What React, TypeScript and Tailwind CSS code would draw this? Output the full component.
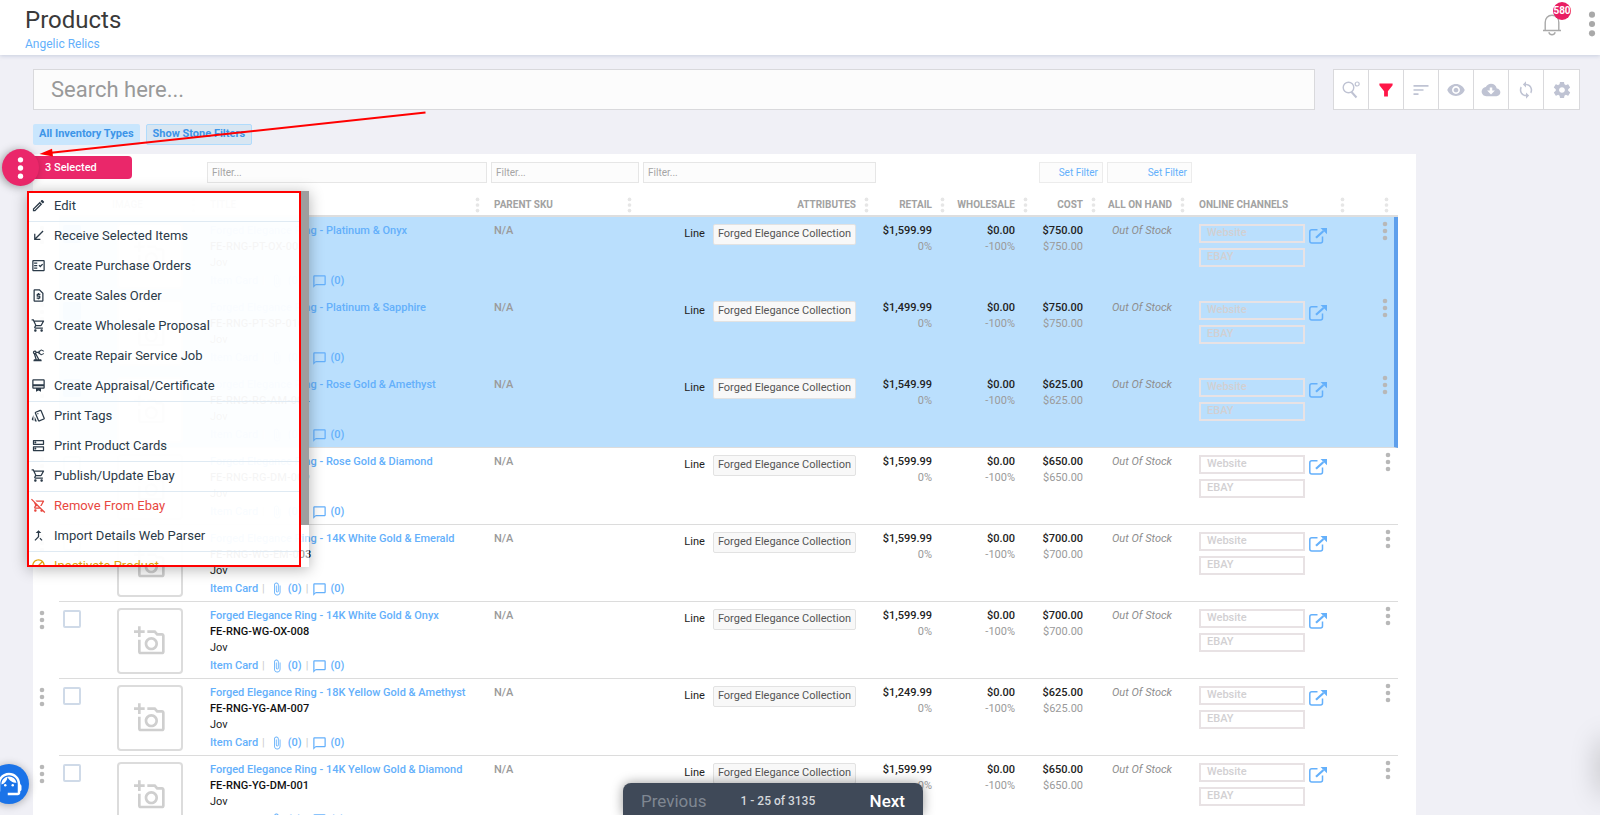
import type { ReactNode } from "react";
import type { IconType } from "react-icons";
import { IoMdEye, IoMdCloudDownload, IoMdSync, IoMdSettings } from "react-icons/io";
import {
  MdAttachFile,
  MdChatBubbleOutline,
  MdOutlineAddAPhoto,
  MdOutlineBlock,
  MdOutlineCallMerge,
  MdOutlineCallReceived,
  MdOutlineCardMembership,
  MdOutlineDns,
  MdOutlineEdit,
  MdOutlineFactCheck,
  MdOutlinePrecisionManufacturing,
  MdOutlineRemoveShoppingCart,
  MdOutlineRequestPage,
  MdOutlineShoppingCart,
  MdOutlineStyle,
  MdOutlineSupportAgent,
  MdSort,
} from "react-icons/md";

type Product = {
  metal: string;
  sku: string;
  retail: string;
  cost: string;
  selected?: boolean;
};

const products: Product[] = [
  { metal: "Platinum & Onyx", sku: "FE-RNG-PT-OX-005", retail: "$1,599.99", cost: "$750.00", selected: true },
  { metal: "Platinum & Sapphire", sku: "FE-RNG-PT-SP-010", retail: "$1,499.99", cost: "$750.00", selected: true },
  { metal: "Rose Gold & Amethyst", sku: "FE-RNG-RG-AM-004", retail: "$1,549.99", cost: "$625.00", selected: true },
  { metal: "Rose Gold & Diamond", sku: "FE-RNG-RG-DM-009", retail: "$1,599.99", cost: "$650.00" },
  { metal: "14K White Gold & Emerald", sku: "FE-RNG-WG-EM-003", retail: "$1,599.99", cost: "$700.00" },
  { metal: "14K White Gold & Onyx", sku: "FE-RNG-WG-OX-008", retail: "$1,599.99", cost: "$700.00" },
  { metal: "18K Yellow Gold & Amethyst", sku: "FE-RNG-YG-AM-007", retail: "$1,249.99", cost: "$625.00" },
  { metal: "14K Yellow Gold & Diamond", sku: "FE-RNG-YG-DM-001", retail: "$1,599.99", cost: "$650.00" },
];

type MenuItem = { label: string; icon: IconType; divider?: boolean; color?: string };

const menuItems: MenuItem[] = [
  { label: "Edit", icon: MdOutlineEdit },
  { label: "Receive Selected Items", icon: MdOutlineCallReceived, divider: true },
  { label: "Create Purchase Orders", icon: MdOutlineFactCheck },
  { label: "Create Sales Order", icon: MdOutlineRequestPage },
  { label: "Create Wholesale Proposal", icon: MdOutlineShoppingCart },
  { label: "Create Repair Service Job", icon: MdOutlinePrecisionManufacturing },
  { label: "Create Appraisal/Certificate", icon: MdOutlineCardMembership },
  { label: "Print Tags", icon: MdOutlineStyle, divider: true },
  { label: "Print Product Cards", icon: MdOutlineDns },
  { label: "Publish/Update Ebay", icon: MdOutlineShoppingCart, divider: true },
  { label: "Remove From Ebay", icon: MdOutlineRemoveShoppingCart, divider: true, color: "text-[#e8483f]" },
  { label: "Import Details Web Parser", icon: MdOutlineCallMerge },
  { label: "Inactivate Product", icon: MdOutlineBlock, divider: true, color: "text-[#e0a30c]" },
];

function Dots({ className }: { className: string }) {
  return (
    <svg viewBox="0 0 6 20" className={className} fill="currentColor" aria-hidden="true">
      <circle cx="3" cy="3" r="2.3" />
      <circle cx="3" cy="10" r="2.3" />
      <circle cx="3" cy="17" r="2.3" />
    </svg>
  );
}

function SearchOptionsIcon() {
  return (
    <svg viewBox="0 0 18 18" className="size-[18px]" fill="none" stroke="currentColor" aria-hidden="true">
      <circle cx="6.5" cy="6.5" r="5.3" strokeWidth="1.4" />
      <path d="M9.5 11 14.5 16.5" strokeWidth="2" />
      <circle cx="15.2" cy="3" r="2" strokeWidth="1.2" />
    </svg>
  );
}

function FunnelIcon() {
  return (
    <svg viewBox="0 0 14 14" className="size-3.5" fill="currentColor" aria-hidden="true">
      <path d="M.4.5h13.2v1.7L8.900 8.200V13.500H5.100V8.200L.4 2.200z" />
    </svg>
  );
}

function BellIcon() {
  return (
    <svg viewBox="0 0 20 22" className="h-[22px] w-5" fill="none" stroke="currentColor" strokeWidth="1.4" aria-hidden="true">
      <path d="M1 16.500h18M3.200 16.300V8.500C3.200 4.200 6 1.300 10 1.300s6.800 2.900 6.800 7.200v7.800" />
      <path d="M6.800 18.300c.5 1.600 1.700 2.400 3.200 2.400s2.700-.8 3.200-2.400" />
    </svg>
  );
}

function OpenIcon() {
  return (
    <svg viewBox="0 0 18 16" className="h-4 w-[18px]" fill="none" stroke="currentColor" aria-hidden="true">
      <path d="M8.500 1.700H2.800c-1.200 0-2 .8-2 2v9.300c0 1.200.8 2 2 2h8.700c1.200 0 2-.8 2-2V8.500" strokeWidth="1.500" />
      <path d="M7 9.800 14.500 3" strokeWidth="2.200" />
      <path d="M11.500 0H18v6.300z" fill="currentColor" stroke="none" />
    </svg>
  );
}

function Header() {
  return (
    <header className="relative z-10 flex h-[55px] shrink-0 justify-between bg-white pl-[25px] pr-1 shadow-[0_1px_4px_rgba(150,165,195,0.45)]">
      <div>
        <h1 className="mt-1 text-2xl leading-8 text-[#3a3a3a]">Products</h1>
        <a href="#" className="block text-xs leading-4 text-[#64b0fb]">Angelic Relics</a>
      </div>
      <div className="flex items-start gap-[26px] pt-3.5">
        <button aria-label="Notifications" className="relative text-[#a9a9a9]">
          <BellIcon />
          <span className="absolute -top-3 left-[11px] flex size-[18px] items-center justify-center rounded-full bg-[#e91e63] text-[10px] font-bold text-white">
            580
          </span>
        </button>
        <button aria-label="More" className="-mt-1 text-[#a9a9a9]">
          <Dots className="h-7 w-2" />
        </button>
      </div>
    </header>
  );
}

function Tool({ label, children }: { label: string; children: ReactNode }) {
  return (
    <button aria-label={label} className="flex w-[35px] items-center justify-center border-r border-[#d9d9dc] last:border-r-0">
      {children}
    </button>
  );
}

function Toolbar() {
  return (
    <div className="flex h-[41px] border border-[#d9d9dc] bg-white text-[#bfc3d3]">
      <Tool label="Search options"><SearchOptionsIcon /></Tool>
      <Tool label="Filter"><span className="text-[#ff1748]"><FunnelIcon /></span></Tool>
      <Tool label="Sort"><MdSort size={20} /></Tool>
      <Tool label="Visibility"><IoMdEye size={20} /></Tool>
      <Tool label="Download"><IoMdCloudDownload size={20} /></Tool>
      <Tool label="Refresh"><IoMdSync size={20} /></Tool>
      <Tool label="Settings"><IoMdSettings size={20} /></Tool>
    </div>
  );
}

function HeadCell({ children, right }: { children?: ReactNode; right?: boolean }) {
  return (
    <th className="whitespace-nowrap border-b-2 border-[#dedede] p-0 font-bold">
      <div className={right ? "flex items-center justify-end gap-2 pr-[9px] pt-3" : "flex items-center justify-between pl-[5px] pr-[9px] pt-3"}>
        <span>{children}</span>
        <Dots className="h-4 w-[5px] shrink-0 text-[#e6e6e6]" />
      </div>
    </th>
  );
}

function FilterInput({ label }: { label: string }) {
  return (
    <td className="px-0.5 py-0">
      <input
        aria-label={label}
        placeholder="Filter..."
        className="block h-[21px] w-full border border-[#e6e6e6] bg-[#fcfcfc] px-1 text-[10px] placeholder:text-[#a5a5a5]"
      />
    </td>
  );
}

function SetFilter() {
  return (
    <td className="px-0.5 py-0">
      <button className="block h-[21px] w-full border border-[#ececec] bg-[#fcfcfc] pr-1 text-right text-[10px] text-[#64b0fb]">
        Set Filter
      </button>
    </td>
  );
}

function Row({ product, last }: { product: Product; last?: boolean }) {
  const { selected } = product;
  const line = selected && !last ? "" : "border-b border-[#dcdcdc]";
  const cell = `p-0 align-top ${line} ${selected ? "bg-[#badffd]" : ""}`;
  const title = `Forged Elegance Ring - ${product.metal}`;

  return (
    <tr className="h-[77px]">
      <td className="p-0 align-top">
        <button aria-label="Row menu" className="ml-1.5 mt-2 block text-[#b8b8b8]">
          <Dots className="h-5 w-1.5" />
        </button>
      </td>
      <td className={cell}>
        <input
          type="checkbox"
          aria-label={title}
          defaultChecked={selected}
          className="ml-1 mt-2 block size-[18px] appearance-none rounded-xs border-2 border-[#cfdae8] checked:border-[#5aa8f8] checked:bg-[#5aa8f8]"
        />
      </td>
      <td className={cell}>
        <button aria-label="Add photo" className="ml-2.5 mt-1.5 flex size-[66px] items-center justify-center rounded-sm border-2 border-[#dcdcdc] bg-white text-[#cfcfcf]">
          <MdOutlineAddAPhoto size={32} />
        </button>
      </td>
      <td className={cell}>
        <div className="pl-[5px] pt-1.5 leading-4">
          <a href="#" className="block whitespace-nowrap font-medium text-[#64b0fb]">{title}</a>
          <div className="font-medium text-[#111]">{product.sku}</div>
          <div className="text-[#222]">Jov</div>
          <div className="mt-0.5 flex items-center font-medium text-[#64b0fb]">
            <a href="#">Item Card</a>
            <span className="ml-1 mr-[5px] font-normal text-[#ccc]">|</span>
            <a href="#" className="flex items-center gap-1"><MdAttachFile size={14} />(0)</a>
            <span className="mx-1 font-normal text-[#ccc]">|</span>
            <a href="#" className="flex items-center gap-[3px]"><MdChatBubbleOutline size={15} />(0)</a>
          </div>
        </div>
      </td>
      <td className={cell}>
        <div className="pl-[5px] pt-1.5 font-medium leading-4 text-[#9a9a9a]">N/A</div>
      </td>
      <td className={cell}>
        <div className="flex items-center justify-end gap-2 pr-[22px] pt-[7px] text-[#222]">
          Line
          <span className="flex h-[21px] items-center rounded-xs border border-[#e2e2e2] bg-[#f8f8f8] px-1 text-[#555]">
            Forged Elegance Collection
          </span>
        </div>
      </td>
      <td className={cell}>
        <div className="pr-[22px] pt-1.5 text-right leading-4 text-[#222]">
          <div className="font-medium">{product.retail}</div>
          <div className="text-[#9a9a9a]">0%</div>
        </div>
      </td>
      <td className={cell}>
        <div className="pr-[22px] pt-1.5 text-right leading-4 text-[#222]">
          <div className="font-medium">$0.00</div>
          <div className="text-[#9a9a9a]">-100%</div>
        </div>
      </td>
      <td className={cell}>
        <div className="pr-[22px] pt-1.5 text-right leading-4 text-[#222]">
          <div className="font-medium">{product.cost}</div>
          <div className="text-[#9a9a9a]">{product.cost}</div>
        </div>
      </td>
      <td className={cell}>
        <div className="pr-[22px] pt-1.5 text-right italic leading-4 text-[#8e8e8e]">Out Of Stock</div>
      </td>
      <td className={cell}>
        <div className="flex items-start gap-1 pl-[5px] pt-[7px]">
          <div className="flex w-[106px] flex-col gap-[5px] font-medium text-[#d2d0d2]">
            <button className="flex h-[19px] items-center border-2 border-[#e8e2e4] px-1.5">Website</button>
            <button className="flex h-[19px] items-center border-2 border-[#e8e2e4] px-1.5">EBAY</button>
          </div>
          <a href="#" aria-label="Open listing" className="mt-1 text-[#64b0fb]"><OpenIcon /></a>
        </div>
      </td>
      <td className={selected ? `${cell} border-r-4 border-r-[#5e9fec]` : cell}>
        <button aria-label="Row actions" className={selected ? "ml-7 mt-1 block text-[#b8b8b8]" : "ml-[31px] mt-1 block text-[#b8b8b8]"}>
          <Dots className="h-5 w-1.5" />
        </button>
      </td>
    </tr>
  );
}

function ProductTable() {
  return (
    <section className="ml-[33px] mr-[184px] mt-[9px] bg-white pr-[18px] pt-2">
      <table className="w-full table-fixed border-separate border-spacing-0 text-left text-[11px]">
        <colgroup>
          <col className="w-[26px]" />
          <col className="w-12" />
          <col className="w-[98px]" />
          <col />
          <col className="w-[152px]" />
          <col className="w-[237px]" />
          <col className="w-[76px]" />
          <col className="w-[83px]" />
          <col className="w-[68px]" />
          <col className="w-[89px]" />
          <col className="w-[160px]" />
          <col className="w-11" />
        </colgroup>
        <thead>
          <tr className="h-[21px]">
            <td colSpan={3} />
            <FilterInput label="Title filter" />
            <FilterInput label="Parent SKU filter" />
            <FilterInput label="Attributes filter" />
            <td colSpan={2} />
            <SetFilter />
            <SetFilter />
            <td colSpan={2} />
          </tr>
          <tr className="h-[34px] text-[10px] text-[#a2a2a2]">
            <td />
            <th className="border-b-2 border-[#dedede]" aria-label="Select" />
            <HeadCell>IMAGE</HeadCell>
            <HeadCell>TITLE</HeadCell>
            <HeadCell>PARENT SKU</HeadCell>
            <HeadCell right>ATTRIBUTES</HeadCell>
            <HeadCell right>RETAIL</HeadCell>
            <HeadCell right>WHOLESALE</HeadCell>
            <HeadCell right>COST</HeadCell>
            <HeadCell right>ALL ON HAND</HeadCell>
            <HeadCell>ONLINE CHANNELS</HeadCell>
            <HeadCell />
          </tr>
        </thead>
        <tbody>
          {products.map((product, i) => (
            <Row key={product.sku} product={product} last={!products[i + 1]?.selected} />
          ))}
        </tbody>
      </table>
    </section>
  );
}

function SelectionMenu() {
  return (
    <>
      <div className="absolute left-5 top-[156px] flex h-[23px] w-28 items-center rounded bg-[#ea276a] pl-[25px] pt-0.5 text-[11px] font-medium text-white">
        3 Selected
      </div>
      <button
        aria-label="Bulk actions"
        className="absolute left-0.5 top-[149px] flex size-[37px] items-center justify-center rounded-full bg-[#ea276a] text-white shadow-[-2px_1px_8px_rgba(0,0,0,0.35)]"
      >
        <Dots className="h-6 w-[7px]" />
      </button>
      <div className="absolute left-[27px] top-[191px] flex h-[376px] w-[282px] shadow-[0_2px_14px_rgba(0,0,0,0.3)]">
        <ul className="flex-1 overflow-hidden bg-white/96 outline-2 -outline-offset-2 outline-[#f00]">
          {menuItems.map(({ label, icon: Icon, divider, color }) => (
            <li key={label} className={divider ? "border-t border-[#dfeaf3]" : "border-t border-transparent"}>
              <button className={`flex h-[29px] w-full items-center gap-2 pb-0.5 pl-1 text-[13px] ${color ?? "text-[#2b3a48]"}`}>
                <Icon size={15} />
                {label}
              </button>
            </li>
          ))}
        </ul>
        <div className="w-2 bg-white/60">
          <div className="h-[334px] bg-[#9e9e9e]" />
        </div>
      </div>
    </>
  );
}

function Arrow() {
  return (
    <svg viewBox="0 0 390 50" className="pointer-events-none absolute left-[38px] top-[108px] h-[50px] w-[390px]" aria-hidden="true">
      <path d="M387.500 4.500 13 44.800" stroke="#f00" strokeWidth="2" />
      <path d="M1.500 46 14 40.800 15 48.400z" fill="#f00" />
    </svg>
  );
}

export default function App() {
  return (
    <div className="relative flex h-screen flex-col overflow-hidden bg-[#f0f0f6] font-[Roboto,sans-serif] text-xs">
      <Header />
      <main>
        <div className="flex gap-[18px] pl-[33px] pr-5 pt-3.5">
          <input
            aria-label="Search"
            placeholder="Search here..."
            className="h-[41px] min-w-0 flex-1 border border-[#d9d9dc] bg-[#fcfcfc] px-[17px] text-[22px] placeholder:text-[#999]"
          />
          <Toolbar />
        </div>
        <div className="mt-3.5 flex gap-1.5 pl-[33px] text-[11px] font-bold text-[#3d95e8]">
          <button className="h-[21px] rounded-xs bg-[#c9e6fd] px-1.5">All Inventory Types</button>
          <button className="h-[21px] rounded-xs border border-[#b0dbfc] bg-[#d8e6f2] px-1.5">Show Stone Filters</button>
        </div>
        <ProductTable />
      </main>

      <SelectionMenu />
      <Arrow />

      <nav className="absolute bottom-0 left-[623px] flex h-8 w-[300px] items-center rounded-t-lg bg-[#3f4958] px-[18px] pt-1 shadow-[0_0_12px_rgba(0,0,0,0.4)]">
        <button className="text-[17px] text-[#7f8792]">Previous</button>
        <span className="ml-[34px] mr-auto text-xs font-medium text-[#d5d8dc]">1 - 25 of 3135</span>
        <button className="text-[17px] font-medium text-white">Next</button>
      </nav>
      <button
        aria-label="Support"
        className="absolute -left-[11px] bottom-[11px] flex size-10 items-center justify-center rounded-full bg-[#1a73e8] text-white shadow-[0_1px_8px_rgba(0,0,0,0.3)]"
      >
        <MdOutlineSupportAgent size={30} />
      </button>
      <div className="absolute -right-4 bottom-5 h-14 w-4 rounded-full shadow-[0_0_28px_rgba(0,0,0,0.25)]" />
    </div>
  );
}
